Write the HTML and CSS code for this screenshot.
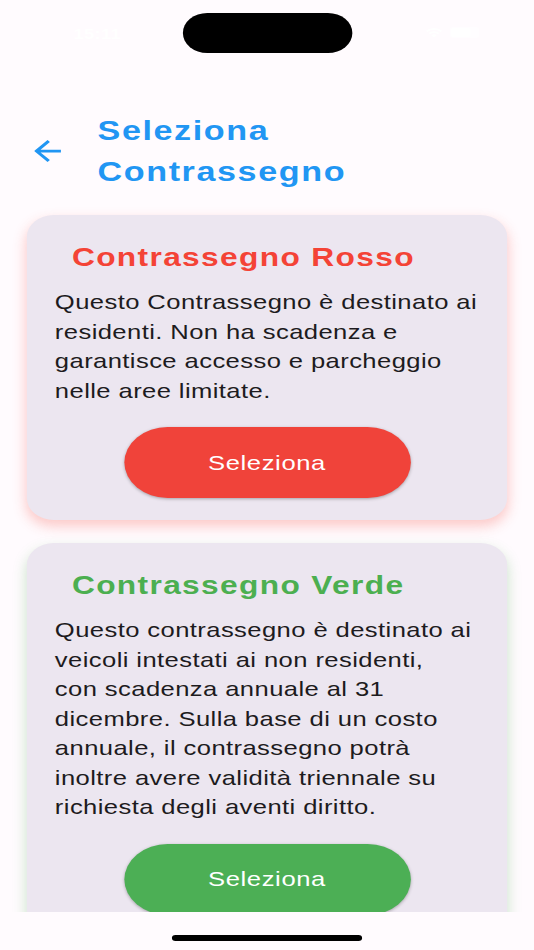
FILE: index.html
```html
<!DOCTYPE html>
<html lang="it">
<head>
<meta charset="utf-8">
<title>Seleziona Contrassegno</title>
<link rel="stylesheet" href="styles.css">
</head>
<body>
<div class="screen">
  <div class="status">
    <span class="time">15:11</span>
    <div class="island"></div>
    <div class="status-icons">
      <svg class="wifi" width="14" height="11" viewBox="0 0 14 11"><path d="M7 10.5 L4.8 8.2 A3.2 3.2 0 0 1 9.2 8.2 Z M2.6 6 A6.3 6.3 0 0 1 11.4 6 L10.2 7.2 A4.6 4.6 0 0 0 3.8 7.2 Z M0.4 3.8 A9.4 9.4 0 0 1 13.6 3.8 L12.4 5 A7.7 7.7 0 0 0 1.6 5 Z" fill="#ffffff"/></svg>
      <div class="battery"><div class="battery-fill"></div></div>
    </div>
  </div>

  <main class="content">
    <header class="appbar">
      <button class="back" aria-label="Indietro">
        <svg width="22" height="22" viewBox="4 4 16 16"><path d="M20 11H7.83l5.59-5.59L12 4l-8 8 8 8 1.410-1.41L7.83 13H20v-2z" fill="#2196F3"/></svg>
      </button>
      <h1 class="page-title">Seleziona Contrassegno</h1>
    </header>

    <section class="card card-red">
      <h2 class="card-title">Contrassegno Rosso</h2>
      <p class="card-text">Questo Contrassegno è destinato ai<br>residenti. Non ha scadenza e<br>garantisce accesso e parcheggio<br>nelle aree limitate.</p>
      <button class="select-btn">Seleziona</button>
    </section>

    <section class="card card-green">
      <h2 class="card-title">Contrassegno Verde</h2>
      <p class="card-text">Questo contrassegno è destinato ai<br>veicoli intestati ai non residenti,<br>con scadenza annuale al 31<br>dicembre. Sulla base di un costo<br>annuale, il contrassegno potrà<br>inoltre avere validità triennale su<br>richiesta degli aventi diritto.</p>
      <button class="select-btn">Seleziona</button>
    </section>
  </main>

  <div class="home-bar"><div class="home-indicator"></div></div>
</div>
</body>
</html>
```

FILE: styles.css
```css
html, body {
  margin: 0;
  padding: 0;
  background: #fffbfe;
  overflow: hidden;
}

body {
  font-family: "Liberation Sans", Arial, sans-serif;
  color: #1d1b20;
}

/* The reference is stretched horizontally; the app is laid out at its
   logical width and widened to the window. */
.screen {
  width: 438px;
  height: 950px;
  display: flex;
  flex-direction: column;
  transform: scaleX(1.2192);
  transform-origin: 0 0;
  background: #fffbfe;
}

.status {
  height: 60px;
  flex: none;
  display: grid;
  grid-template-columns: 1fr auto 1fr;
  align-items: start;
}

.time {
  justify-self: center;
  margin-top: 25px;
  margin-left: 10px;
  color: #ffffff;
  font-weight: 700;
  font-size: 15px;
  letter-spacing: 0.3px;
}

.island {
  width: 139px;
  height: 40px;
  margin-top: 13px;
  background: #000;
  border-radius: 20px;
}

.status-icons {
  justify-self: center;
  margin-top: 27px;
  margin-left: 16px;
  display: flex;
  align-items: center;
  gap: 6px;
}

.battery {
  width: 24px;
  height: 11px;
  border-radius: 3px;
  background: rgba(255, 255, 255, 0.6);
  padding: 1px;
  box-sizing: border-box;
}

.battery-fill {
  width: 70%;
  height: 100%;
  background: #ffffff;
  border-radius: 2px;
}

.content {
  flex: 1;
  overflow: hidden;
  display: flex;
  flex-direction: column;
}

.appbar {
  display: flex;
  align-items: center;
  margin-top: 50px;
  padding-left: 28px;
  height: 82px;
  flex: none;
}

.back {
  width: 22px;
  height: 22px;
  padding: 0;
  border: 0;
  background: none;
  display: flex;
  align-items: center;
  justify-content: center;
}

.page-title {
  margin: 0 0 0 30px;
  max-width: 240px;
  font-size: 28px;
  line-height: 41px;
  font-weight: 700;
  letter-spacing: 1.3px;
  color: #2196F3;
}

.card {
  flex: none;
  margin: 23px 22px 0;
  padding: 26px 23px 22px;
  background: #ece6f0;
  border-radius: 22px;
  display: flex;
  flex-direction: column;
}

.card-red {
  box-shadow: 0 6px 12px rgba(244, 67, 54, 0.28);
}

.card-green {
  box-shadow: 0 6px 12px rgba(76, 175, 80, 0.28);
}

.card-title {
  margin: 0;
  padding-left: 14px;
  font-size: 26px;
  line-height: 32px;
  font-weight: 700;
  letter-spacing: 1.1px;
}

.card-red .card-title { color: #f44336; }
.card-green .card-title { color: #4caf50; }

.card-text {
  margin: 14px 0 0;
  font-size: 21px;
  line-height: 29.5px;
  letter-spacing: 0.33px;
  color: #1d1b20;
  white-space: nowrap;
}

.select-btn {
  align-self: center;
  margin-top: 22px;
  width: 235px;
  height: 71px;
  border: 0;
  border-radius: 999px;
  font-family: "Liberation Sans", Arial, sans-serif;
  font-size: 21px;
  letter-spacing: 0.5px;
  color: #ffffff;
  box-shadow: 0 1px 3px rgba(0, 0, 0, 0.3);
}

.card-red .select-btn { background: #f0433a; }
.card-green .select-btn { background: #4caf55; }

.home-bar {
  height: 38px;
  flex: none;
  background: #fffbfe;
  display: flex;
  justify-content: center;
}

.home-indicator {
  width: 156px;
  height: 5.5px;
  margin-top: 23px;
  background: #000;
  border-radius: 3px;
}
```
